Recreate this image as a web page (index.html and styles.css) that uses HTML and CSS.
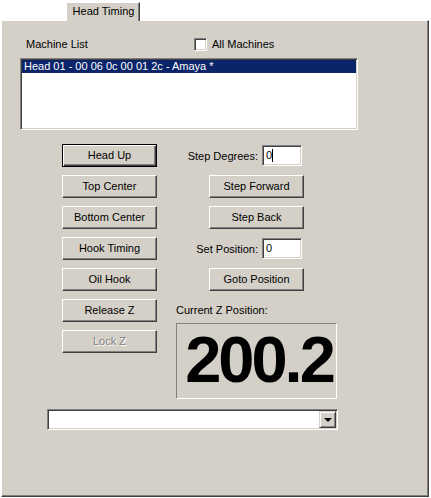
FILE: index.html
```html
<!DOCTYPE html>
<html>
<head>
<meta charset="utf-8">
<title>Head Timing</title>
<link rel="stylesheet" href="styles.css">
</head>
<body>
<div class="tabstrip">
  <div class="tab">Head Timing</div>
</div>
<div class="panel">
  <div class="header">
    <span class="hlabel">Machine List</span>
    <span class="check"></span>
    <span class="checklabel">All Machines</span>
  </div>
  <div class="listbox">
    <div class="item selected">Head 01 - 00 06 0c 00 01 2c - Amaya *</div>
  </div>
  <div class="controls">
    <div class="col-left">
      <div class="btn default">Head Up</div>
      <div class="btn">Top Center</div>
      <div class="btn">Bottom Center</div>
      <div class="btn">Hook Timing</div>
      <div class="btn">Oil Hook</div>
      <div class="btn">Release Z</div>
      <div class="btn disabled">Lock Z</div>
    </div>
    <div class="col-right">
      <div class="field-row">
        <span class="flabel">Step Degrees:</span>
        <span class="edit">0<span class="caret"></span></span>
      </div>
      <div class="btn rbtn">Step Forward</div>
      <div class="btn rbtn">Step Back</div>
      <div class="field-row">
        <span class="flabel">Set Position:</span>
        <span class="edit">0</span>
      </div>
      <div class="btn rbtn">Goto Position</div>
      <div class="zlabel">Current Z Position:</div>
      <div class="zbox">200.2</div>
    </div>
  </div>
  <div class="combo">
    <span class="combo-text"></span>
    <span class="combo-btn"><span class="arrow"></span></span>
  </div>
</div>
</body>
</html>
```

FILE: styles.css
```css
* { box-sizing: border-box; }

html, body {
  margin: 0;
  padding: 0;
  background: #ffffff;
}

body {
  font-family: "Liberation Sans", Arial, sans-serif;
  font-size: 11px;
  color: #000;
  width: 431px;
  height: 498px;
  overflow: hidden;
}

.tabstrip {
  height: 20px;
  display: flex;
  align-items: flex-end;
  padding-left: 66px;
}

.tab {
  position: relative;
  z-index: 2;
  width: 74px;
  height: 19px;
  margin-bottom: -1px;
  background: #d4d0c8;
  border-top: 1px solid #fff;
  border-left: 1px solid #fff;
  border-right: 1px solid #404040;
  box-shadow: inset -1px 0 #808080;
  text-align: center;
  line-height: 16px;
  padding-left: 1px;
}

.panel {
  margin-left: 1px;
  width: 428px;
  height: 477px;
  background: #d4d0c8;
  border-top: 1px solid #fff;
  border-left: 1px solid #fff;
  border-right: 1px solid #404040;
  border-bottom: 1px solid #404040;
  box-shadow: inset -1px -1px #808080;
  padding: 17px 0 0 0;
}

.header {
  display: flex;
  align-items: center;
  height: 13px;
  padding-left: 24px;
}

.hlabel {
  width: 168px;
  line-height: 13px;
}

.check {
  width: 13px;
  height: 13px;
  background: #fff;
  border: 1px solid;
  border-color: #808080 #fff #fff #808080;
  box-shadow: inset 1px 1px #404040, inset -1px -1px #d4d0c8;
}

.checklabel {
  margin-left: 5px;
  line-height: 13px;
}

.listbox {
  margin: 7px 0 0 18px;
  width: 338px;
  height: 72px;
  background: #fff;
  border: 1px solid;
  border-color: #808080 #fff #fff #808080;
  box-shadow: inset 1px 1px #404040, inset -1px -1px #d4d0c8;
  padding: 1px;
}

.item {
  height: 13px;
  line-height: 13px;
  padding-left: 2px;
  white-space: nowrap;
}

.item.selected {
  background: #0a246a;
  color: #fff;
}

.controls {
  display: flex;
  margin-top: 14px;
  padding-left: 60px;
  gap: 19px;
}

.col-left {
  display: flex;
  flex-direction: column;
  gap: 8px;
  width: 95px;
}

.col-right {
  display: flex;
  flex-direction: column;
  width: 161px;
}

.btn {
  width: 95px;
  height: 23px;
  line-height: 21px;
  text-align: center;
  background: #d4d0c8;
  border: 1px solid;
  border-color: #fff #404040 #404040 #fff;
  box-shadow: inset -1px -1px #808080;
  white-space: nowrap;
}

.btn.default {
  border: 1px solid #000;
  box-shadow: inset 1px 1px #fff, inset -1px -1px #404040, inset -2px -2px #808080;
}

.btn.disabled {
  color: #808080;
  text-shadow: 1px 1px 0 #fff;
}

.rbtn {
  margin-left: 33px;
  margin-top: 8px;
}

.field-row {
  display: flex;
  align-items: center;
  justify-content: flex-end;
  gap: 4px;
  width: 126px;
  height: 23px;
}

.col-right .field-row + .rbtn,
.col-right .rbtn + .field-row {
  margin-top: 8px;
}

.edit {
  display: flex;
  align-items: center;
  width: 40px;
  height: 21px;
  background: #fff;
  border: 1px solid;
  border-color: #808080 #fff #fff #808080;
  box-shadow: inset 1px 1px #404040, inset -1px -1px #d4d0c8;
  padding-left: 3px;
  line-height: 13px;
}

.caret {
  display: inline-block;
  width: 1px;
  height: 13px;
  background: #000;
}

.zlabel {
  margin-top: 13px;
  line-height: 13px;
}

.zbox {
  margin-top: 6px;
  width: 161px;
  height: 76px;
  border: 1px solid;
  border-color: #808080 #fff #fff #808080;
  font-weight: bold;
  font-size: 65px;
  letter-spacing: -3px;
  line-height: 72px;
  text-align: center;
  padding-left: 5px;
}

.combo {
  display: flex;
  margin: 10px 0 0 45px;
  width: 291px;
  height: 21px;
  background: #fff;
  border: 1px solid;
  border-color: #808080 #fff #fff #808080;
  box-shadow: inset 1px 1px #404040, inset -1px -1px #d4d0c8;
  padding: 1px;
}

.combo-text {
  flex: 1;
}

.combo-btn {
  width: 17px;
  height: 17px;
  background: #d4d0c8;
  border: 1px solid;
  border-color: #d4d0c8 #404040 #404040 #d4d0c8;
  box-shadow: inset 1px 1px #fff, inset -1px -1px #808080;
  display: flex;
  align-items: center;
  justify-content: center;
}

.arrow {
  width: 0;
  height: 0;
  border-left: 4px solid transparent;
  border-right: 4px solid transparent;
  border-top: 4px solid #000;
  margin-top: 1px;
}
```
